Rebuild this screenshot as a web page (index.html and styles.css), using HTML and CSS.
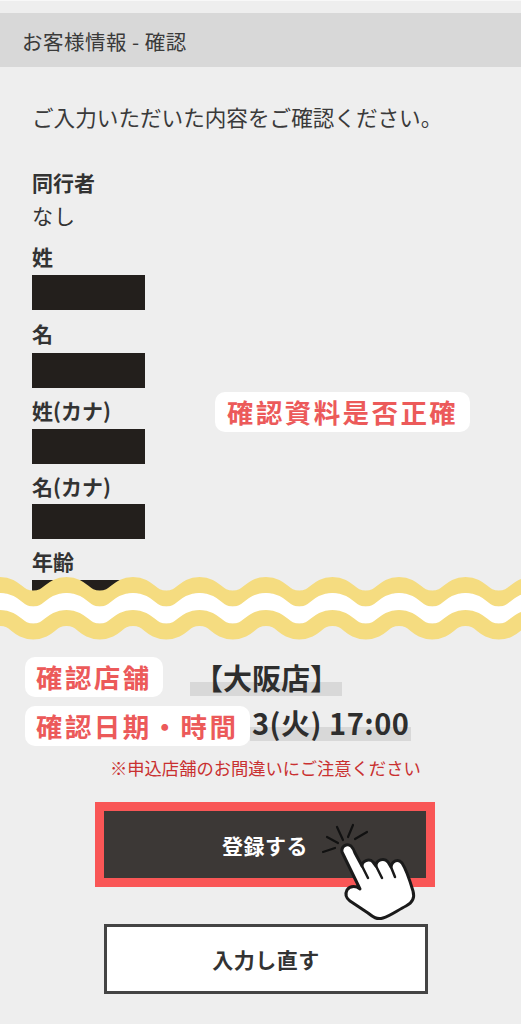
FILE: index.html
```html
<!DOCTYPE html>
<html lang="ja">
<head>
<meta charset="utf-8">
<title>お客様情報 - 確認</title>
<link rel="stylesheet" href="styles.css">
</head>
<body>
<main class="page">
  <h1 class="title">お客様情報 - 確認</h1>
  <section class="form">
    <p class="intro">ご入力いただいた内容をご確認ください。</p>
    <dl class="fields">
      <dt class="label label-first">同行者</dt>
      <dd class="value">なし</dd>
      <dt class="label">姓</dt>
      <dd class="mask"></dd>
      <dt class="label label-name">名</dt>
      <dd class="mask"></dd>
      <dt class="label">姓(カナ)</dt>
      <dd class="mask"></dd>
      <dt class="label">名(カナ)</dt>
      <dd class="mask"></dd>
      <dt class="label">年齢</dt>
      <dd class="mask"></dd>
    </dl>
    <span class="pill pill-check" lang="zh-TW">確認資料是否正確</span>
  </section>
  <svg class="wave" viewBox="0 0 521 74" aria-hidden="true">
    <path class="wave-yellow" d="M-66.500 18c16.600 0 16.600 13.500 33.250 13.500S-16.600 18 0 18s16.600 13.500 33.250 13.500S49.900 18 66.500 18s16.600 13.500 33.250 13.500S116.400 18 133 18s16.600 13.500 33.250 13.500S182.900 18 199.500 18s16.600 13.500 33.250 13.500S249.400 18 266 18s16.600 13.500 33.250 13.500S315.900 18 332.500 18s16.600 13.500 33.250 13.500S382.400 18 399 18s16.600 13.500 33.250 13.500S448.900 18 465.500 18s16.600 13.500 33.250 13.500S515.400 18 532 18"/>
    <path class="wave-white" d="M-66.500 34.500c16.600 0 16.600 13.500 33.250 13.500S-16.600 34.500 0 34.500s16.600 13.500 33.250 13.500S49.900 34.500 66.500 34.500s16.600 13.500 33.250 13.500S116.400 34.500 133 34.500s16.600 13.500 33.250 13.500S182.900 34.500 199.500 34.500s16.600 13.500 33.250 13.500S249.400 34.500 266 34.500s16.600 13.500 33.250 13.500S315.900 34.500 332.500 34.500s16.600 13.500 33.250 13.500S382.400 34.500 399 34.500s16.600 13.500 33.250 13.500S448.900 34.500 465.500 34.500s16.600 13.500 33.250 13.500S515.400 34.500 532 34.500"/>
    <path class="wave-yellow" d="M-66.500 51c16.600 0 16.600 13.500 33.250 13.500S-16.600 51 0 51s16.600 13.500 33.250 13.500S49.900 51 66.500 51s16.600 13.500 33.250 13.500S116.400 51 133 51s16.600 13.500 33.250 13.500S182.900 51 199.500 51s16.600 13.500 33.250 13.500S249.400 51 266 51s16.600 13.500 33.250 13.500S315.900 51 332.500 51s16.600 13.500 33.250 13.500S382.400 51 399 51s16.600 13.500 33.250 13.500S448.900 51 465.500 51s16.600 13.500 33.250 13.500S515.400 51 532 51"/>
  </svg>
  <section class="summary">
    <span class="pill pill-store" lang="zh-TW">確認店舗</span>
    <span class="pill pill-date" lang="zh-TW">確認日期・時間</span>
    <div class="summary-row row-store"><span class="marked marked-store">【大阪店】</span></div>
    <div class="summary-row row-date"><span class="marked marked-date">3(火) 17:00</span></div>
    <p class="notice">※申込店舗のお間違いにご注意ください</p>
  </section>
  <div class="actions">
    <div class="primary-frame">
      <a class="btn btn-primary">登録する</a>
      <svg class="hand" viewBox="0 0 140 130" aria-hidden="true">
        <g class="spark">
          <path d="M27 37 38 43M37 27 43 40M53 25 48 37M67 32 55 39M23 52 35 48"/>
        </g>
        <path class="hand-shape" d="M42 52C41 46 47 43 51 46 53 48 54 50 55 53L62 66C62 61 69 58 73 62L76 66C76 60 84 57 88 62L91 67C92 61 98 58 102 63 106 69 110 81 113 91 115 98 112 103 106 106 98 110 90 116 83 118 77 120 73 117 68 113L50 101C46 98 45 94 47 90 49 87 53 86 57 87L60 89Z"/>
        <path class="hand-line" d="M62 66 68 78M76 66 82 78M91 67 95 77"/>
      </svg>
    </div>
    <a class="btn btn-secondary">入力し直す</a>
  </div>
</main>
</body>
</html>
```

FILE: styles.css
```css
* { box-sizing: border-box; }

html, body {
  margin: 0;
  padding: 0;
  background: #eeeeee;
}

body {
  font-family: "Noto Sans CJK JP", "Noto Sans", sans-serif;
  color: #333333;
}

.page {
  width: 521px;
  height: 1024px;
  padding-top: 12px;
  border-top: 1px solid #f8f8f8;
  overflow: hidden;
}

.title {
  margin: 0;
  height: 54px;
  padding-left: 22px;
  background: #d8d8d8;
  font-size: 20.500px;
  font-weight: 400;
  line-height: 56px;
  letter-spacing: 0.500px;
  color: #3a3a3a;
}

.form {
  position: relative;
  height: 525px;
  padding: 34px 32px 0;
  overflow: hidden;
}

.intro {
  margin: 0;
  font-size: 21.600px;
  line-height: 32px;
  color: #3a3a3a;
}

.fields { margin: 34px 0 0; }

.label {
  height: 40.750px;
  padding-top: 7px;
  font-size: 21px;
  font-weight: 700;
  line-height: 30px;
}

.label-first {
  height: 32px;
  padding-top: 0;
}

.label-name {
  height: 43px;
  padding-top: 8px;
}

.value {
  margin: 0;
  height: 35px;
  font-size: 21px;
  line-height: 32px;
  letter-spacing: 1px;
}

.mask {
  margin: 0;
  width: 113px;
  height: 35px;
  background: #231f1c;
}

.pill {
  position: absolute;
  z-index: 2;
  height: 40px;
  background: #ffffff;
  border-radius: 10px;
  font-family: "Noto Sans CJK TC", "Noto Sans CJK JP", sans-serif;
  font-size: 26.500px;
  font-weight: 700;
  line-height: 40px;
  letter-spacing: 2.400px;
  color: #ec5a5a;
  white-space: nowrap;
}

.pill-check { left: 215px; top: 325px; width: 255px; padding-left: 12px; }
.pill-store { left: 25px; top: 0; width: 138px; padding-left: 11px; }
.pill-date { left: 25px; top: 49px; width: 225px; padding-left: 11px; }

.wave {
  display: block;
  width: 521px;
  height: 74px;
  margin-top: -25px;
  position: relative;
}

.wave-yellow, .wave-white {
  fill: none;
  stroke-width: 16px;
}

.wave-yellow { stroke: #f5dc80; }
.wave-white { stroke: #ffffff; stroke-width: 17px; }

.summary {
  position: relative;
  margin-top: 16px;
  height: 145px;
}

.summary-row {
  display: flex;
  height: 49px;
}

.row-store { padding-left: 190px; }
.row-date { padding-left: 250px; }

.marked {
  display: block;
  font-size: 29px;
  font-weight: 700;
  color: #2e2e2e;
  background: linear-gradient(#d8d8d8, #d8d8d8) no-repeat left bottom / 100% 14px;
}

.marked-store {
  width: 152px;
  height: 39px;
  padding-left: 4px;
  line-height: 40px;
}

.marked-date {
  width: 161px;
  height: 35px;
  padding-left: 2px;
  line-height: 33px;
  letter-spacing: 0.500px;
  white-space: nowrap;
}

.notice {
  margin: 0;
  padding: 1px 0 0 110px;
  font-size: 17.300px;
  line-height: 24px;
  color: #c93030;
}

.actions {
  display: flex;
  flex-direction: column;
  padding-left: 95px;
}

.primary-frame {
  position: relative;
  width: 340px;
  height: 85px;
  border: 9px solid #f95656;
}

.btn {
  display: flex;
  align-items: center;
  justify-content: center;
  font-size: 21px;
  font-weight: 700;
  letter-spacing: 0.500px;
}

.btn-primary {
  height: 100%;
  background: #3c3836;
  color: #ffffff;
}

.btn-secondary {
  width: 324px;
  height: 70px;
  margin: 37px 0 0 9px;
  border: 3px solid #444444;
  background: #ffffff;
  color: #333333;
}

.hand {
  position: absolute;
  left: 196px;
  top: -11px;
  width: 140px;
  height: 130px;
}

.spark path {
  fill: none;
  stroke: #111111;
  stroke-width: 2.200px;
  stroke-linecap: round;
}

.hand-shape {
  fill: #ffffff;
  stroke: #1a1a1a;
  stroke-width: 3px;
  stroke-linejoin: round;
}

.hand-line {
  fill: none;
  stroke: #1a1a1a;
  stroke-width: 2.500px;
  stroke-linecap: round;
}
```
